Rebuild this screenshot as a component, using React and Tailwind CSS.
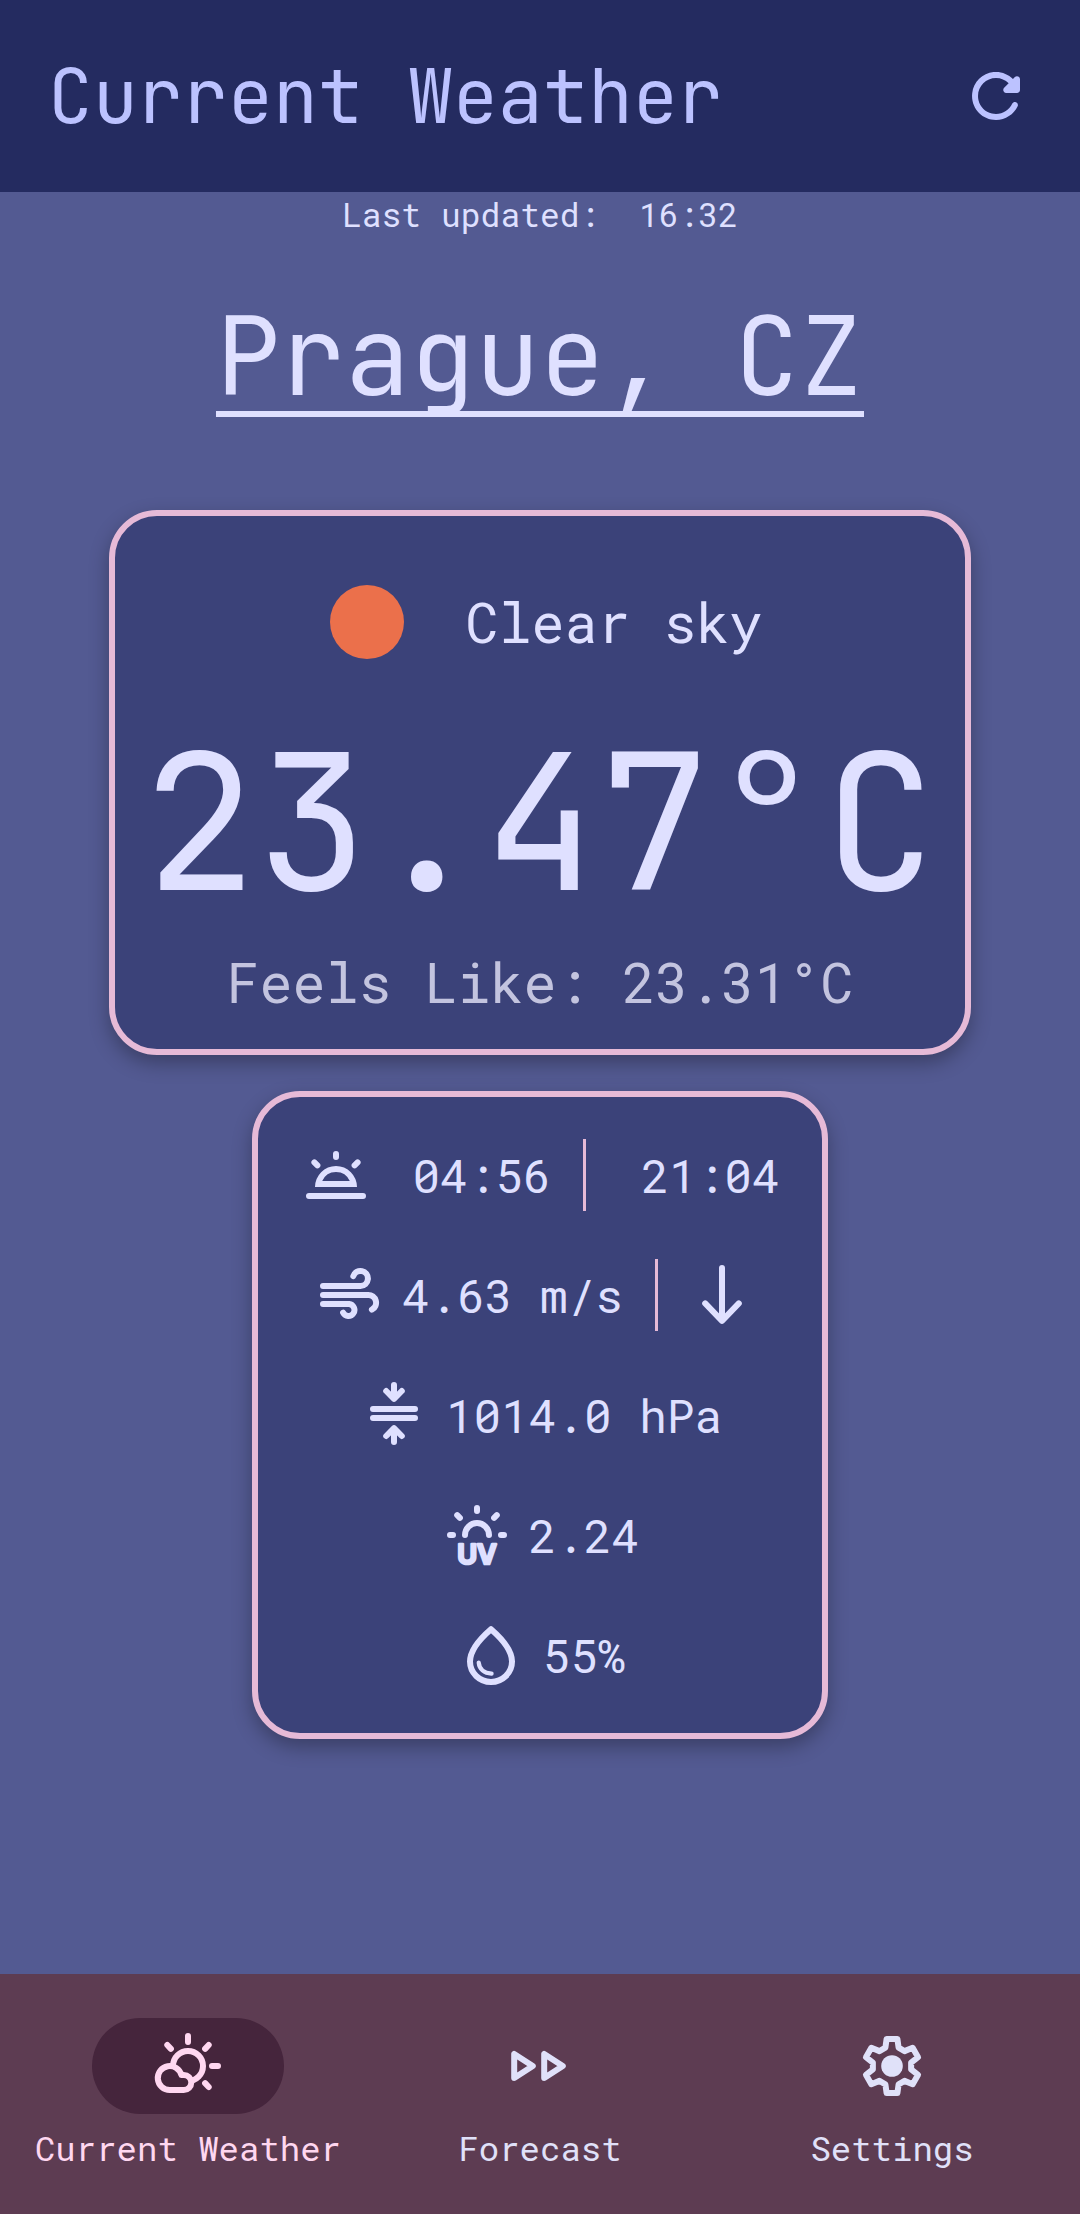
import React from "react";

function Icon({ children, label }) {
  return (
    <svg
      viewBox="0 0 24 24"
      className="size-18 shrink-0"
      fill="none"
      stroke="currentColor"
      strokeWidth="2"
      strokeLinecap="round"
      strokeLinejoin="round"
      role={label ? "img" : undefined}
      aria-label={label}
      aria-hidden={label ? undefined : true}
    >
      {children}
    </svg>
  );
}

const RefreshIcon = () => (
  <Icon>
    <path
      fill="currentColor"
      stroke="none"
      d="M17.65 6.35c-1.63-1.63-3.94-2.57-6.48-2.31-3.67.37-6.69 3.35-7.1 7.02C3.52 15.91 7.27 20 12 20c3.19 0 5.93-1.87 7.21-4.56.32-.67-.16-1.44-.9-1.44-.37 0-.72.2-.88.53-1.13 2.43-3.84 3.97-6.8 3.31-2.22-.49-4.01-2.3-4.48-4.52C5.31 9.44 8.26 6 12 6c1.66 0 3.14.69 4.22 1.78l-1.51 1.51c-.63.63-.19 1.71.7 1.71H19c.55 0 1-.45 1-1V6.41c0-.89-1.08-1.34-1.71-.71z"
    />
  </Icon>
);

const SunriseIcon = () => (
  <Icon label="Sunrise and sunset">
    <path d="M3 19h18M12 5v1M4.8 7.8l1 1M19.2 7.8l-1 1" />
    <path
      fill="currentColor"
      stroke="none"
      fillRule="evenodd"
      d="M5 16a7 7 0 0 1 14 0zM7.4 14h9.2A5 5 0 0 0 7.4 14z"
    />
  </Icon>
);

const WindIcon = () => (
  <Icon label="Wind">
    <path d="M3 9h12.5a2.5 2.5 0 1 0-2.4-3.3M3 12h15a2.6 2.6 0 0 1 1.3 4.9M3 15h8.7a2 2 0 1 1-2 2.9" />
  </Icon>
);

const ArrowDownIcon = () => (
  <Icon label="Wind direction">
    <path d="M12 3v17.3M6.4 14.8l5.6 5.8 5.6-5.8" />
  </Icon>
);

const PressureIcon = () => (
  <Icon label="Pressure">
    <path d="M5 10h14M5 13h14M12 2v4.4M9.4 4 12 6.6 14.6 4M12 21v-4.4M9.4 19l2.6-2.6 2.6 2.6" />
  </Icon>
);

const UvIcon = () => (
  <Icon label="UV index">
    <path d="M8 12a4 4 0 0 1 8 0M12 3v1M3 12h1M20 12h1M5.4 5.4l.9.9M18.6 5.4l-.9.9" />
    <text
      x="12"
      y="21.5"
      textAnchor="middle"
      fill="currentColor"
      strokeWidth="0.9"
      className="font-['Inter',sans-serif] text-[9px] font-semibold"
    >
      UV
    </text>
  </Icon>
);

const HumidityIcon = () => (
  <Icon label="Humidity">
    <path d="M12 3.4C9 6 5 10.3 5 14.2a7 6.8 0 0 0 14 0C19 10.3 15 6 12 3.4z" />
    <path strokeWidth="1.4" d="M7.9 14.5c.2 2.2 1.8 3.6 4.3 3.7" />
  </Icon>
);

const PartlyCloudyIcon = () => (
  <Icon>
    <circle cx="12" cy="12" r="5" />
    <path d="M12 2v2M20 12h2M17.7 6.3 18.9 5M6.3 6.3 5.1 5M17.7 17.7l1.2 1.3" />
    <path
      className="fill-[#45253c]"
      d="M6 20h4.6a2.4 2.4 0 0 0 0-5H9.8A4 4 0 1 0 6 20z"
    />
  </Icon>
);

const ForecastIcon = () => (
  <Icon>
    <path d="M3.4 8v8l6.2-4zM13.4 8v8l6.2-4z" />
  </Icon>
);

// One tooth of the cog, repeated every 60 degrees round the centre.
const tooth = [
  [-2.2, -6.1],
  [-1.8, -9],
  [1.8, -9],
  [2.2, -6.1],
];
const cog = [0, 60, 120, 180, 240, 300]
  .flatMap((deg) => {
    const a = (deg * Math.PI) / 180;
    return tooth.map(([x, y]) => [
      12 + x * Math.cos(a) - y * Math.sin(a),
      12 + x * Math.sin(a) + y * Math.cos(a),
    ]);
  })
  .map((p) => p.map((n) => n.toFixed(2)).join(","))
  .join(" ");

const SettingsIcon = () => (
  <Icon>
    <polygon points={cog} />
    <circle cx="12" cy="12" r="3.6" fill="currentColor" stroke="none" />
  </Icon>
);

function Card({ className, children }) {
  return (
    <section
      className={
        "w-fit rounded-[48px] border-6 border-[#e6bad7] bg-[#3b4279] shadow-[0_8px_20px_rgba(0,0,0,0.3)] " +
        className
      }
    >
      {children}
    </section>
  );
}

function Divider() {
  return <span className="h-18 w-[3px] bg-[#e6bad7]" />;
}

function Row({ className = "gap-4", children }) {
  return (
    <li className={"flex h-30 items-center justify-center " + className}>
      {children}
    </li>
  );
}

function NavItem({ icon, label, active }) {
  return (
    <li>
      <a
        href={"#" + label.toLowerCase().replace(" ", "-")}
        aria-current={active ? "page" : undefined}
        className={
          "flex flex-col items-center gap-3 whitespace-nowrap text-[34px] leading-11 " +
          (active ? "text-[#ffd7f0]" : "text-[#e0e1f9]")
        }
      >
        <span
          className={
            "flex h-24 w-48 items-center justify-center rounded-full " +
            (active ? "bg-[#45253c]" : "")
          }
        >
          {icon}
        </span>
        {label}
      </a>
    </li>
  );
}

export default function App() {
  return (
    <div className="flex min-h-screen flex-col bg-[#535a92] font-['Roboto_Mono','DejaVu_Sans_Mono',monospace] text-[#dfe0ff]">
      <header className="flex h-48 items-center justify-between bg-[#242b60] px-12 text-[#bcc2ff]">
        <h1 className="font-['JetBrains_Mono','Roboto_Mono',monospace] text-[75px] leading-24">
          Current Weather
        </h1>
        <button type="button" aria-label="Refresh">
          <RefreshIcon />
        </button>
      </header>

      <main className="flex flex-1 flex-col items-center pb-12">
        <p className="whitespace-pre text-[33px] leading-11">
          {"Last updated:  16:32"}
        </p>
        <h2 className="mt-12 font-['JetBrains_Mono','Roboto_Mono',monospace] text-[108px] leading-36 underline decoration-[6px] underline-offset-[16px] [text-decoration-skip-ink:none]">
          Prague, CZ
        </h2>

        <Card className="mt-[82px] flex flex-col items-center px-7 pt-[58px] pb-7">
          <div className="flex h-24 items-center gap-12 text-[55px]">
            <svg viewBox="0 0 100 100" className="size-25" aria-hidden="true">
              <circle cx="50" cy="50" r="37" fill="#eb704b" />
            </svg>
            <span>Clear sky</span>
          </div>
          <p className="mt-11 font-['JetBrains_Mono','Roboto_Mono',monospace] text-[189px] leading-54">
            23.47°C
          </p>
          <p className="mt-4 mb-[3px] text-[55px] leading-18 text-[#c3c4df]">
            Feels Like: 23.31°C
          </p>
        </Card>

        <Card className="mt-9 px-[42px] py-[18px]">
          <ul className="text-[46px]">
            <Row className="">
              <SunriseIcon />
              <span className="mr-8 ml-10">04:56</span>
              <Divider />
              <span className="ml-14">21:04</span>
            </Row>
            <Row className="pr-2">
              <WindIcon />
              <span className="mr-8 ml-4">4.63 m/s</span>
              <Divider />
              <span className="ml-7">
                <ArrowDownIcon />
              </span>
            </Row>
            <Row>
              <PressureIcon />
              <span>1014.0 hPa</span>
            </Row>
            <Row>
              <UvIcon />
              <span>2.24</span>
            </Row>
            <Row>
              <HumidityIcon />
              <span>55%</span>
            </Row>
          </ul>
        </Card>
      </main>

      <nav className="h-60 bg-[#5d3c52] px-3 pt-11">
        <ul className="grid grid-cols-3">
          <NavItem icon={<PartlyCloudyIcon />} label="Current Weather" active />
          <NavItem icon={<ForecastIcon />} label="Forecast" />
          <NavItem icon={<SettingsIcon />} label="Settings" />
        </ul>
      </nav>
    </div>
  );
}
